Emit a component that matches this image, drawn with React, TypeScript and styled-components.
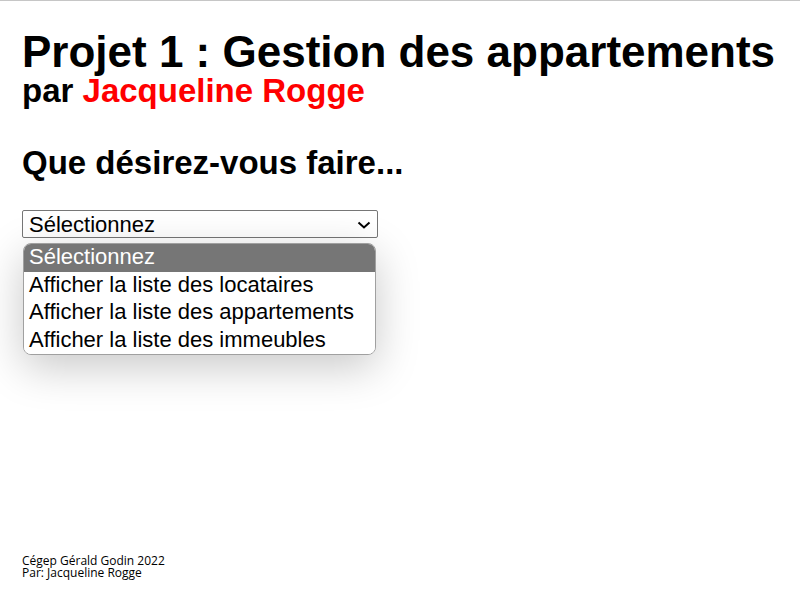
import React from "react";
import styled, { createGlobalStyle } from "styled-components";

const Global = createGlobalStyle`
  html, body { margin: 0; padding: 0; background: #fff; }
  body { font-family: "Liberation Sans", Arial, sans-serif; color: #000; }
`;

const Page = styled.div`
  box-sizing: border-box;
  min-height: 600px;
  border-top: 1px solid #c6c6c6;
  padding: 29px 22px 22px;
  display: flex;
  flex-direction: column;
`;

const Title = styled.h1`
  margin: 0;
  font-size: 44px;
  line-height: 44px;
  font-weight: bold;
`;

const Subtitle = styled.h2`
  margin: 0;
  font-size: 33px;
  line-height: 33px;
  font-weight: bold;
`;

const Name = styled.span`
  color: #ff0000;
`;

const Question = styled.h2`
  margin: 39px 0 0;
  font-size: 33px;
  line-height: 33px;
  font-weight: bold;
`;

const SelectWrap = styled.div`
  position: relative;
  margin-top: 31px;
  width: 356px;
`;

const Select = styled.select`
  appearance: none;
  -webkit-appearance: none;
  display: block;
  box-sizing: border-box;
  width: 356px;
  height: 28px;
  font-family: "Liberation Sans", Arial, sans-serif;
  font-size: 22px;
  color: #000;
  background: #fff;
  border: 1px solid #767676;
  border-radius: 2px;
  padding: 0 30px 0 6px;
  margin: 0;
`;

const Chevron = styled.svg`
  position: absolute;
  top: 11px;
  right: 7px;
  width: 14px;
  height: 8px;
  pointer-events: none;
`;

const ListBox = styled.ul`
  position: absolute;
  top: 33px;
  left: 1px;
  width: 353px;
  box-sizing: border-box;
  margin: 0;
  padding: 0;
  list-style: none;
  background: #fff;
  border: 1px solid #a0a0a0;
  border-radius: 8px;
  overflow: hidden;
  box-shadow: 0 12px 44px rgba(0, 0, 0, 0.22);
`;

const Option = styled.li<{ $active?: boolean }>`
  font-size: 22px;
  line-height: 25px;
  height: 27.5px;
  box-sizing: border-box;
  padding: 0 5px;
  white-space: nowrap;
  background: ${(p) => (p.$active ? "#767676" : "#fff")};
  color: ${(p) => (p.$active ? "#fff" : "#000")};
`;

const Footer = styled.footer`
  margin-top: auto;
  font-family: "Open Sans", sans-serif;
  font-size: 12px;
  line-height: 11.5px;
  color: #000;
`;

const options = [
  "Sélectionnez",
  "Afficher la liste des locataires",
  "Afficher la liste des appartements",
  "Afficher la liste des immeubles",
];

export default function App() {
  return (
    <>
      <Global />
      <Page>
        <Title>Projet 1 : Gestion des appartements</Title>
        <Subtitle>
          par <Name>Jacqueline Rogge</Name>
        </Subtitle>
        <Question>Que désirez-vous faire...</Question>
        <SelectWrap>
          <Select defaultValue="0">
            {options.map((o, i) => (
              <option key={i} value={String(i)}>
                {o}
              </option>
            ))}
          </Select>
          <Chevron viewBox="0 0 14 8" aria-hidden="true">
            <polyline
              points="1.5,1.5 7,6.5 12.5,1.5"
              fill="none"
              stroke="#000"
              strokeWidth="2"
            />
          </Chevron>
          <ListBox role="listbox">
            {options.map((o, i) => (
              <Option key={i} $active={i === 0}>
                {o}
              </Option>
            ))}
          </ListBox>
        </SelectWrap>
        <Footer>
          Cégep Gérald Godin 2022
          <br />
          Par: Jacqueline Rogge
        </Footer>
      </Page>
    </>
  );
}
